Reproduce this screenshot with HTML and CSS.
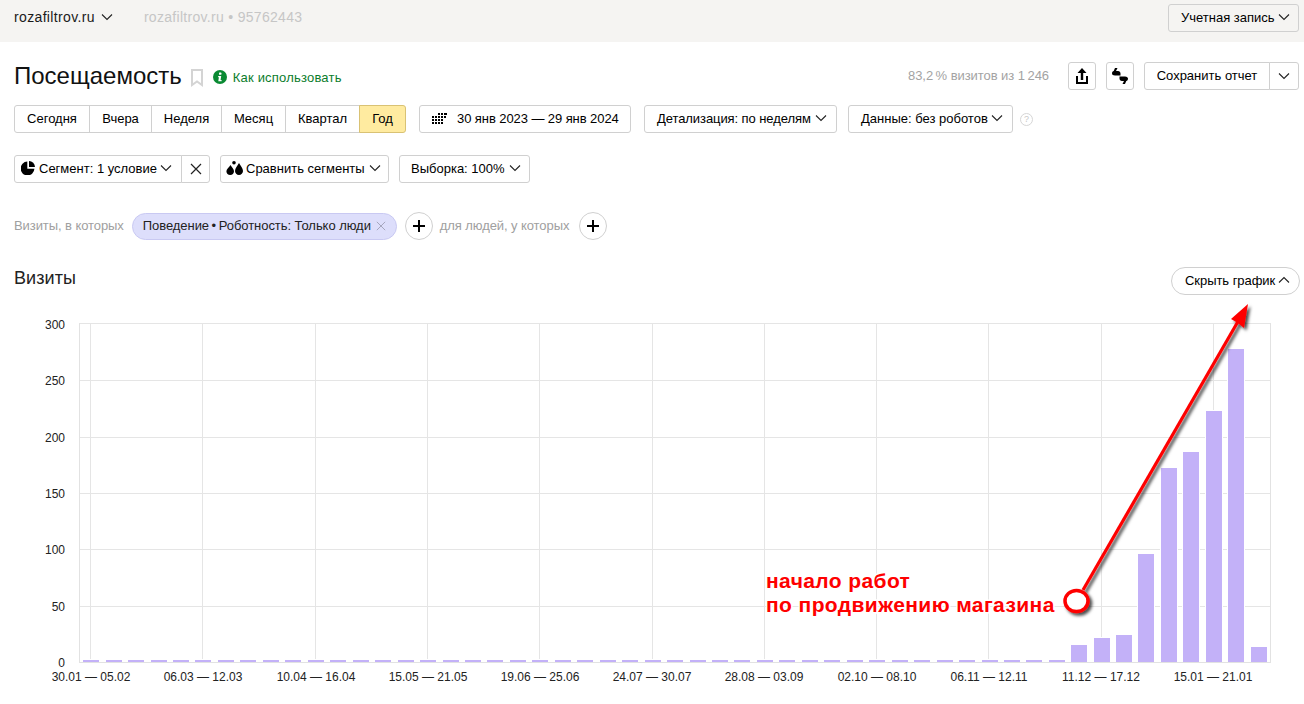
FILE: index.html
```html
<!DOCTYPE html>
<html lang="ru">
<head>
<meta charset="utf-8">
<title>Посещаемость</title>
<link rel="stylesheet" href="styles.css">
</head>
<body>
<header class="topbar">
  <div class="site">
    <span class="site-name">rozafiltrov.ru</span>
    <svg class="chev" viewBox="0 0 12 8"><path d="M1 1.500 6 6.500 11 1.500"/></svg>
    <span class="site-id">rozafiltrov.ru • 95762443</span>
  </div>
  <button class="btn btn-account">Учетная запись <svg class="chev" viewBox="0 0 12 8"><path d="M1 1.500 6 6.500 11 1.500"/></svg></button>
</header>

<main class="page">
  <section class="title-row">
    <h1 class="title">Посещаемость</h1>
    <svg class="bookmark" viewBox="0 0 12 18"><path d="M1 1h10v15l-5-3.500L1 16z"/></svg>
    <svg class="info" viewBox="0 0 14 14"><circle cx="7" cy="7" r="7"/><rect x="6" y="2.600" width="2.400" height="2.200" rx=".6"/><path d="M5.200 6h3l-.6 4h1v1.300H5.300l.6-4h-.8z"/></svg>
    <a class="howto">Как использовать</a>
    <span class="spacer"></span>
    <span class="share">83,2&#8201;% визитов из 1&#8201;246</span>
    <button class="btn btn-icon"><svg class="ico-share" viewBox="0 0 12 16"><path d="M6 0 10.500 5H7.200v7H4.800V5H1.500z"/><path d="M0 8h2v6h8V8h2v8H0z"/></svg></button>
    <button class="btn btn-icon"><svg class="ico-quote" viewBox="0 0 16 16"><path d="M5.500 0 4 3H6C7.500 3 8.500 4 8.500 5.500V7.500H3C1 7.500 0 6.500 0 5.200 0 4 .7 3.300 1.700 2.900L3 0z"/><path d="M10.500 16 12 13H10C8.500 13 7.500 12 7.500 10.500V8.500H13C15 8.500 16 9.500 16 10.800 16 12 15.300 12.700 14.300 13.100L13 16z"/></svg></button>
    <div class="group">
      <button class="btn seg seg-save">Сохранить отчет</button>
      <button class="btn seg seg-more"><svg class="chev" viewBox="0 0 12 8"><path d="M1 1.500 6 6.500 11 1.500"/></svg></button>
    </div>
  </section>

  <section class="row row-period">
    <div class="group">
      <button class="btn seg tab-today">Сегодня</button>
      <button class="btn seg tab-yesterday">Вчера</button>
      <button class="btn seg tab-week">Неделя</button>
      <button class="btn seg tab-month">Месяц</button>
      <button class="btn seg tab-quarter">Квартал</button>
      <button class="btn seg seg-active tab-year">Год</button>
    </div>
    <button class="btn btn-date">
      <svg class="ico-cal" viewBox="0 0 15 12"><path d="M6 0h2v2H6zM9 0h2v2H9zM12 0h3v2h-3zM0 3h2v2H0zM3 3h2v2H3zM6 3h2v2H6zM9 3h2v2H9zM12 3h2v2h-2zM0 6h2v2H0zM3 6h2v2H3zM6 6h2v2H6zM9 6h2v2H9zM0 9h2v2H0zM3 9h2v2H3zM6 9h2v2H6zM9 9h2v2H9z"/></svg>
      30 янв 2023 — 29 янв 2024
    </button>
    <button class="btn btn-detail">Детализация: по неделям <svg class="chev" viewBox="0 0 12 8"><path d="M1 1.500 6 6.500 11 1.500"/></svg></button>
    <button class="btn btn-data">Данные: без роботов <svg class="chev" viewBox="0 0 12 8"><path d="M1 1.500 6 6.500 11 1.500"/></svg></button>
    <span class="help">?</span>
  </section>

  <section class="row row-segment">
    <div class="group">
      <button class="btn seg btn-segment">
        <svg class="ico-pie" viewBox="0 0 14 14"><path d="M6.300.6v7.100h7.100A6.900 6.900 0 1 1 6.300.6z"/><path d="M8 0a6.200 6.200 0 0 1 6 6H8z"/></svg>
        Сегмент: 1 условие <svg class="chev" viewBox="0 0 12 8"><path d="M1 1.500 6 6.500 11 1.500"/></svg>
      </button>
      <button class="btn seg seg-close"><svg class="ico-x" viewBox="0 0 12 12"><path d="M1 1 11 11M11 1 1 11"/></svg></button>
    </div>
    <button class="btn btn-compare">
      <svg class="ico-drops" viewBox="0 0 17 14"><path d="M4.500 4C6 6.500 8 8 8 10.200 8 12.300 6.400 14 4.200 14 2 14 .4 12.300.4 10.200.4 8 3 6.500 4.500 4z"/><circle cx="8" cy="1.800" r="1.800"/><path d="M13 2c1.500 3 4 5 4 8 0 2.300-1.800 4-4 4s-4-1.700-4-4c0-3 2.500-5 4-8z"/></svg>
      Сравнить сегменты <svg class="chev" viewBox="0 0 12 8"><path d="M1 1.500 6 6.500 11 1.500"/></svg>
    </button>
    <button class="btn btn-sample">Выборка: 100% <svg class="chev" viewBox="0 0 12 8"><path d="M1 1.500 6 6.500 11 1.500"/></svg></button>
  </section>

  <section class="row row-filter">
    <span class="hint">Визиты, в которых</span>
    <span class="chip">Поведение&#8201;•&#8201;Роботность: Только люди <svg class="ico-chipx" viewBox="0 0 12 12"><path d="M1 1 11 11M11 1 1 11"/></svg></span>
    <button class="plus"><svg viewBox="0 0 12 12"><path d="M6 0v12M0 6h12"/></svg></button>
    <span class="hint">для людей, у которых</span>
    <button class="plus"><svg viewBox="0 0 12 12"><path d="M6 0v12M0 6h12"/></svg></button>
  </section>

  <section class="chart-head">
    <h2 class="chart-title">Визиты</h2>
    <button class="btn btn-hide">Скрыть график <svg class="chev chev-up" viewBox="0 0 12 8"><path d="M1 6.500 6 1.500 11 6.500"/></svg></button>
  </section>
</main>

<svg class="chart" viewBox="0 295 1304 409">
  <defs>
    <filter id="shadow" x="-20%" y="-20%" width="150%" height="150%">
      <feDropShadow dx="2.500" dy="2.500" stdDeviation="1.800" flood-color="#000" flood-opacity=".7"/>
    </filter>
  </defs>

  <g class="grid">
    <path d="M79 323.500H1270M79 380.500H1270M79 437.500H1270M79 493.500H1270M79 549.500H1270M79 606.500H1270"/>
    <path d="M90.500 323V662M202.500 323V662M315.500 323V662M427.500 323V662M539.500 323V662M652.500 323V662M764.500 323V662M876.500 323V662M988.500 323V662M1101.500 323V662M1213.500 323V662"/>
  </g>

  <g class="ylabels">
    <text x="65" y="329">300</text>
    <text x="65" y="385">250</text>
    <text x="65" y="442">200</text>
    <text x="65" y="498">150</text>
    <text x="65" y="554">100</text>
    <text x="65" y="611">50</text>
    <text x="65" y="667">0</text>
  </g>

  <g class="xlabels">
    <text x="91" y="681">30.01 — 05.02</text>
    <text x="203" y="681">06.03 — 12.03</text>
    <text x="316" y="681">10.04 — 16.04</text>
    <text x="428" y="681">15.05 — 21.05</text>
    <text x="540" y="681">19.06 — 25.06</text>
    <text x="652" y="681">24.07 — 30.07</text>
    <text x="764" y="681">28.08 — 03.09</text>
    <text x="877" y="681">02.10 — 08.10</text>
    <text x="989" y="681">06.11 — 12.11</text>
    <text x="1101" y="681">11.12 — 17.12</text>
    <text x="1213" y="681">15.01 — 21.01</text>
  </g>

  <g class="bars">
    <rect x="83" y="660" width="16" height="2"/><rect x="106" y="660" width="16" height="2"/><rect x="128" y="660" width="16" height="2"/><rect x="151" y="660" width="16" height="2"/><rect x="173" y="660" width="16" height="2"/><rect x="195" y="660" width="16" height="2"/><rect x="218" y="660" width="16" height="2"/><rect x="240" y="660" width="16" height="2"/><rect x="263" y="660" width="16" height="2"/><rect x="285" y="660" width="16" height="2"/><rect x="308" y="660" width="16" height="2"/>
    <rect x="330" y="660" width="16" height="2"/><rect x="353" y="660" width="16" height="2"/><rect x="375" y="660" width="16" height="2"/><rect x="398" y="660" width="16" height="2"/><rect x="420" y="660" width="16" height="2"/><rect x="443" y="660" width="16" height="2"/><rect x="465" y="660" width="16" height="2"/><rect x="487" y="660" width="16" height="2"/><rect x="510" y="660" width="16" height="2"/><rect x="532" y="660" width="16" height="2"/><rect x="555" y="660" width="16" height="2"/>
    <rect x="577" y="660" width="16" height="2"/><rect x="600" y="660" width="16" height="2"/><rect x="622" y="660" width="16" height="2"/><rect x="645" y="660" width="16" height="2"/><rect x="667" y="660" width="16" height="2"/><rect x="690" y="660" width="16" height="2"/><rect x="712" y="660" width="16" height="2"/><rect x="734" y="660" width="16" height="2"/><rect x="757" y="660" width="16" height="2"/><rect x="779" y="660" width="16" height="2"/><rect x="802" y="660" width="16" height="2"/>
    <rect x="824" y="660" width="16" height="2"/><rect x="847" y="660" width="16" height="2"/><rect x="869" y="660" width="16" height="2"/><rect x="892" y="660" width="16" height="2"/><rect x="914" y="660" width="16" height="2"/><rect x="937" y="660" width="16" height="2"/><rect x="959" y="660" width="16" height="2"/><rect x="982" y="660" width="16" height="2"/><rect x="1004" y="660" width="16" height="2"/><rect x="1026" y="660" width="16" height="2"/><rect x="1049" y="660" width="16" height="2"/>
    <rect x="1071" y="645" width="16" height="17"/>
    <rect x="1094" y="638" width="16" height="24"/>
    <rect x="1116" y="635" width="16" height="27"/>
    <rect x="1138" y="554" width="16" height="108"/>
    <rect x="1161" y="468" width="16" height="194"/>
    <rect x="1183" y="452" width="16" height="210"/>
    <rect x="1206" y="411" width="16" height="251"/>
    <rect x="1228" y="349" width="16" height="313"/>
    <rect x="1251" y="647" width="16" height="15"/>
  </g>
  <path class="axis" d="M79.500 323V662.500H1270.500V323"/>

  <g class="note">
    <text x="766" y="588">начало работ</text>
    <text x="766" y="612">по продвижению магазина</text>
  </g>
  <g class="arrow" filter="url(#shadow)">
    <path class="arrow-line" d="M1083 590 1240 318"/>
    <path class="arrow-head" d="M1248 304 1244 328 1238 323 1231 319z"/>
    <ellipse class="arrow-dot" cx="1076.500" cy="601" rx="11.500" ry="10.500"/>
  </g>
</svg>
</body>
</html>
```

FILE: styles.css
```css
* { box-sizing: border-box; }
html, body { margin: 0; padding: 0; }
body {
  width: 1304px;
  height: 704px;
  overflow: hidden;
  background: #fff;
  color: #000;
  font-family: "Liberation Sans", Arial, sans-serif;
  font-size: 13px;
}
button { font-family: inherit; color: inherit; }

.chev {
  width: 12px;
  height: 8px;
  fill: none;
  stroke: #222;
  stroke-width: 1.100;
  flex: none;
}
.btn {
  height: 28px;
  padding: 0 0 2px;
  background: #fff;
  border: 1px solid #d0d0d0;
  border-radius: 3px;
  font-size: 13px;
  line-height: 1;
  display: inline-flex;
  align-items: center;
  justify-content: center;
  gap: 3px;
  flex: none;
  white-space: nowrap;
}

/* top bar */
.topbar {
  height: 42px;
  padding: 4px 5px 0 14px;
  background: #f5f4f2;
  display: flex;
  justify-content: space-between;
  align-items: flex-start;
}
.site { display: flex; align-items: center; height: 26px; font-size: 14px; }
.site-name { color: #1a1a1a; letter-spacing: .35px; }
.site .chev { margin-left: 6px; }
.site-id { margin-left: 31px; color: #c6c6c6; letter-spacing: .3px; }
.btn-account { width: 131px; padding-left: 12px; justify-content: flex-start; background: #f5f4f2; }

/* page rows */
.page { padding: 20px 5px 0 14px; }
.title-row { display: flex; align-items: center; height: 28px; }
.title { margin: 0; font-size: 24px; font-weight: 400; line-height: 28px; color: #111; }
.bookmark { width: 12px; height: 18px; margin: 3px 0 0 9px; fill: none; stroke: #d4d4d4; stroke-width: 2; }
.info { width: 14px; height: 14px; margin: 2px 0 0 10px; fill: #0a8a33; }
.info rect, .info path { fill: #fff; }
.howto { margin: 2px 0 0 6px; color: #0b7d2b; font-size: 13px; letter-spacing: .2px; }
.spacer { flex: 1; }
.share { color: #a3a3a3; font-size: 13px; margin: 0 19px 2px 0; letter-spacing: -.06px; }
.btn-icon { width: 28px; margin-right: 10px; padding: 0; }
.ico-share { width: 12px; height: 16px; fill: #000; }
.ico-quote { width: 16px; height: 16px; fill: #000; }

.group { display: flex; flex: none; }
.group .seg { border-radius: 0; margin-left: -1px; }
.group .seg:first-child { border-radius: 3px 0 0 3px; margin-left: 0; }
.group .seg:last-child { border-radius: 0 3px 3px 0; }
.seg-save { width: 126px; }
.seg-more { width: 30px; padding: 0; }

.row { display: flex; align-items: center; }
.row-period { margin-top: 15px; height: 28px; }
.tab-today { width: 76px; }
.tab-yesterday { width: 63px; }
.tab-week { width: 71px; }
.tab-month { width: 65px; }
.tab-quarter { width: 75px; }
.tab-year { width: 47px; }
.group .seg-active { background: #ffeba0; border-color: #d9c274; position: relative; }
.btn-date { width: 212px; margin-left: 13px; padding-left: 12px; justify-content: flex-start; gap: 10px; letter-spacing: -.08px; }
.ico-cal { width: 15px; height: 12px; margin-top: 2px; fill: #000; shape-rendering: crispEdges; }
.btn-detail { width: 193px; margin-left: 13px; padding-left: 12px; justify-content: flex-start; gap: 4px; letter-spacing: -.08px; }
.btn-data { width: 165px; margin-left: 11px; padding-left: 12px; justify-content: flex-start; }
.help {
  width: 13px;
  height: 13px;
  margin-left: 7px;
  border: 1px solid #d6d6d6;
  border-radius: 50%;
  color: #c8c8c8;
  font-size: 9px;
  line-height: 11px;
  text-align: center;
}

.row-segment { margin-top: 22px; height: 28px; }
.btn-segment { width: 168px; padding-left: 6px; justify-content: flex-start; gap: 4px; }
.btn-segment .chev { margin-left: -1px; }
.ico-pie { width: 14px; height: 14px; fill: #000; }
.seg-close { width: 29px; padding: 0; }
.ico-x { width: 12px; height: 12px; fill: none; stroke: #222; stroke-width: 1.200; }
.btn-compare { width: 169px; margin-left: 10px; padding-left: 5px; justify-content: flex-start; }
.btn-compare .chev { margin-left: 1px; }
.ico-drops { width: 17px; height: 14px; fill: #000; }
.btn-sample { width: 131px; margin-left: 10px; padding-left: 11px; justify-content: flex-start; gap: 4px; }

.row-filter { margin-top: 29px; height: 28px; }
.hint { color: #a0a0a0; font-size: 13px; letter-spacing: -.08px; margin-bottom: 2px; }
.chip {
  width: 265px;
  height: 27px;
  margin-left: 8px;
  padding: 0 0 2px 10px;
  border: 1px solid #c9c9f2;
  border-radius: 14px;
  background: #dddefb;
  color: #222;
  font-size: 13px;
  letter-spacing: -.05px;
  display: flex;
  align-items: center;
  gap: 5px;
  white-space: nowrap;
}
.ico-chipx { width: 10px; height: 10px; fill: none; stroke: #9a9ab0; stroke-width: 1; margin-top: 2px; }
.plus {
  width: 28px;
  height: 28px;
  margin: 0 7px 0 8px;
  padding: 0;
  border: 1px solid #d0d0d0;
  border-radius: 50%;
  background: #fff;
  display: flex;
  align-items: center;
  justify-content: center;
}
.plus svg { width: 12px; height: 12px; stroke: #000; stroke-width: 2; fill: none; }
.plus + .hint + .plus { margin-left: 10px; }

.chart-head {
  margin-top: 27px;
  height: 28px;
  display: flex;
  justify-content: space-between;
  align-items: flex-start;
}
.chart-title { margin: 2px 0 0; font-size: 18px; font-weight: 400; line-height: 18px; color: #222; letter-spacing: .1px; }
.btn-hide { width: 129px; padding-left: 13px; justify-content: flex-start; border-radius: 14px; margin-right: -1px; letter-spacing: -.05px; }

/* chart */
.chart { display: block; width: 1304px; height: 409px; }
.grid path { fill: none; stroke: #e5e5e5; stroke-width: 1; shape-rendering: crispEdges; }
.axis { fill: none; stroke: #e2e2e2; stroke-width: 1; shape-rendering: crispEdges; }
.ylabels text { font-size: 12px; fill: #222; text-anchor: end; }
.xlabels text { font-size: 12px; fill: #222; text-anchor: middle; }
.bars rect { fill: #c3b1f8; stroke: #fff; stroke-width: 1.500; paint-order: stroke; shape-rendering: crispEdges; }
.note text {
  font-size: 21px;
  font-weight: 700;
  fill: #fe0000;
  letter-spacing: .4px;
  stroke: #fff;
  stroke-width: 3px;
  paint-order: stroke;
}
.arrow-line { fill: none; stroke: #fe0000; stroke-width: 3.200; }
.arrow-head { fill: #fe0000; }
.arrow-dot { fill: #fff; stroke: #fe0000; stroke-width: 3.500; }
```
